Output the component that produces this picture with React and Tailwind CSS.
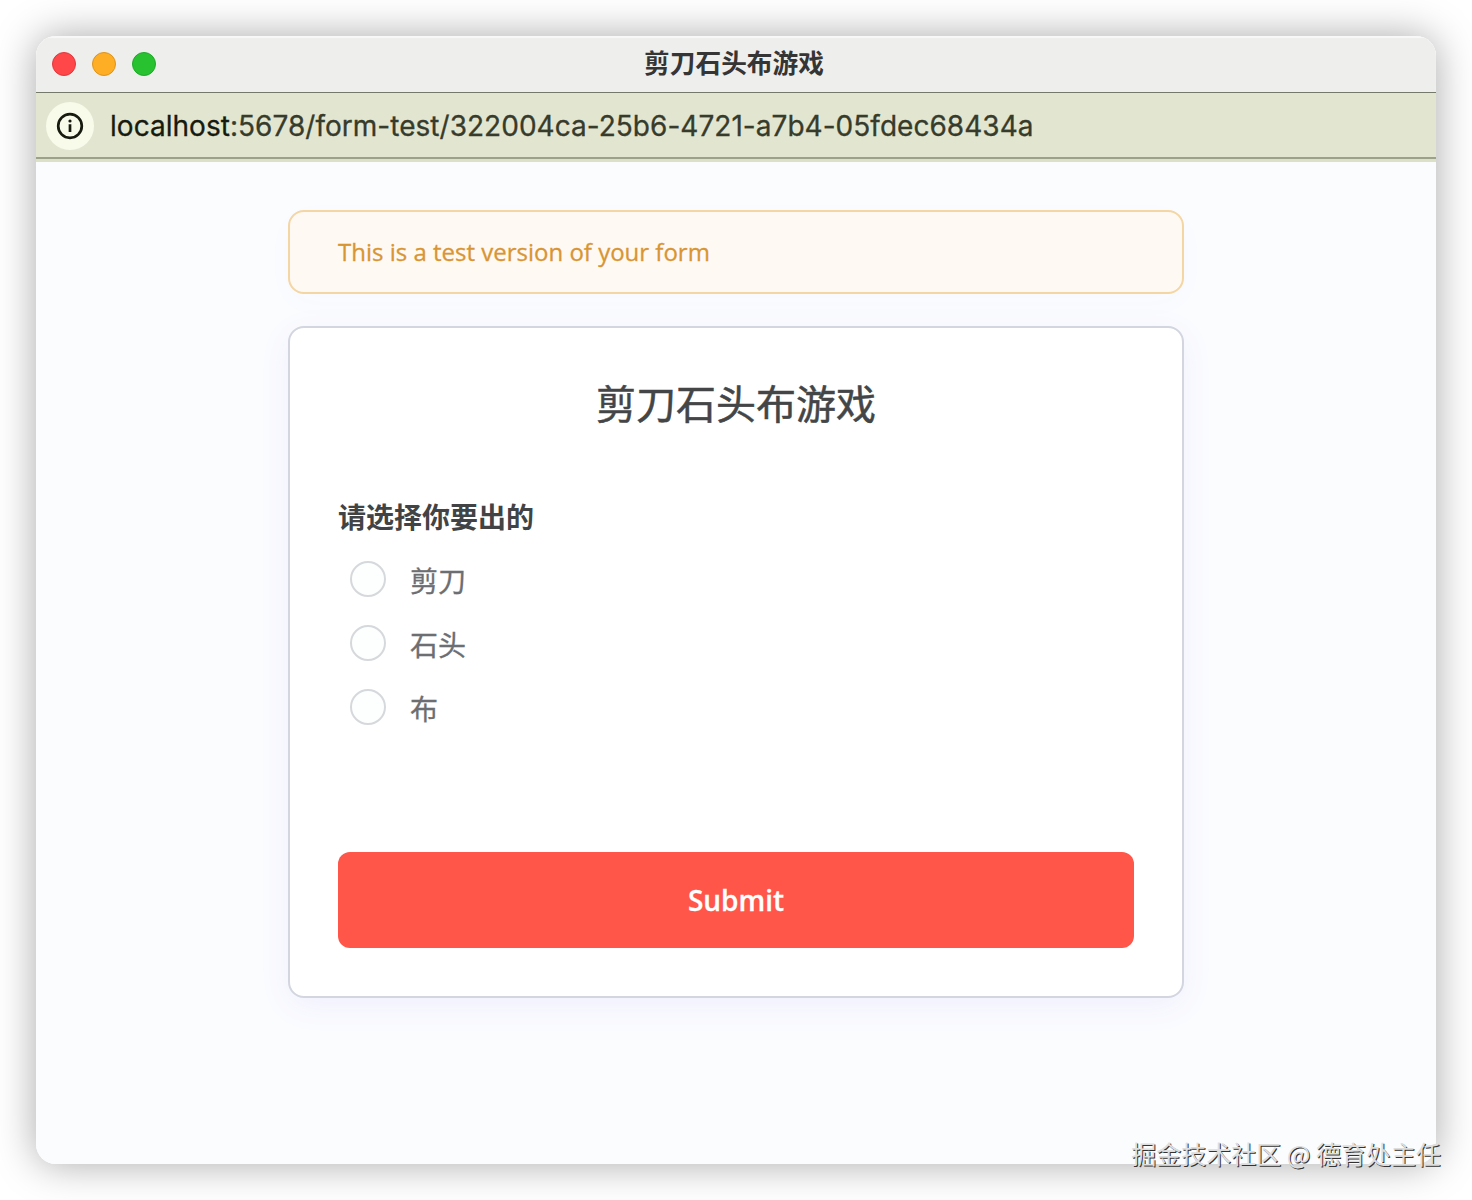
const options = ["剪刀", "石头", "布"];

function TitleBar({ title }) {
  return (
    <div className="relative flex h-[57px] shrink-0 items-center justify-center border-b border-[#75796a] bg-[#eeeeec] shadow-[inset_0_2px_1px_#f8f8f8]">
      <div className="absolute left-4 top-4 flex gap-4">
        <span className="size-6 rounded-full border border-[#e0383c] bg-[#ff4649]" />
        <span className="size-6 rounded-full border border-[#de931c] bg-[#fdae24]" />
        <span className="size-6 rounded-full border border-[#1fa82a] bg-[#28c231]" />
      </div>
      <h1 className="pb-1 pr-1 font-['Noto_Sans_CJK_SC',sans-serif] text-[25.7px] font-bold leading-9 text-[#353535]">
        {title}
      </h1>
    </div>
  );
}

function AddressBar() {
  return (
    <div className="shrink-0 border-b-[3px] border-[#dce0c8] bg-[#e2e6d0]">
      <div className="flex h-[66px] items-center border-b-2 border-[#9ca18a] pl-2.5 pt-0.5">
        <span className="flex size-12 items-center justify-center rounded-full bg-[#f8faea]">
          <svg width="28" height="28" viewBox="0 0 28 28" fill="none">
            <circle cx="14" cy="14" r="11.8" stroke="#171a0f" strokeWidth="2.7" />
            <circle cx="14" cy="9" r="1.6" fill="#171a0f" />
            <path d="M14 12.3v7.6" stroke="#171a0f" strokeWidth="2.7" />
          </svg>
        </span>
        <p className="whitespace-nowrap pl-4 font-['Inter',sans-serif] text-[28px] leading-10 tracking-[0.03px] text-[#373b2b] [-webkit-text-stroke:0.3px]">
          <span className="text-[#171a0f]">localhost</span>
          :5678/form-test/322004ca-25b6-4721-a7b4-05fdec68434a
        </p>
      </div>
    </div>
  );
}

function RadioOption({ label }) {
  return (
    <label className="flex h-16 items-center pl-3 text-[28px] text-[#6c6e72]">
      <input
        type="radio"
        name="choice"
        className="size-9 appearance-none rounded-full border-2 border-[#d6d9dc] bg-[#fdfefe]"
      />
      <span className="pl-6 pt-[3px] leading-10 [-webkit-text-stroke:0.3px]">{label}</span>
    </label>
  );
}

export default function App() {
  return (
    <div className="relative h-[1200px] w-[1472px] overflow-hidden bg-white p-9 font-['Open_Sans','Noto_Sans_CJK_SC',sans-serif]">
      <div className="flex h-[1128px] flex-col rounded-[20px] shadow-[0_0_40px_rgba(0,0,0,0.34)]">
        <div className="flex flex-1 flex-col overflow-hidden rounded-[20px] bg-[#fbfcfe]">
          <TitleBar title="剪刀石头布游戏" />
          <AddressBar />
          <main className="mx-auto flex w-[896px] flex-col gap-8 pt-12">
            <div className="flex h-[84px] items-center rounded-2xl border-2 border-[#f4d5a4] bg-[#fff9f3] px-12 text-2xl text-[#d89534] shadow-[0_8px_32px_rgba(99,77,255,0.02)] [-webkit-text-stroke:0.3px]">
              This is a test version of your form
            </div>
            <form className="flex h-[672px] flex-col rounded-2xl border-2 border-[#d3d5df] bg-white px-12 shadow-[0_8px_32px_rgba(99,77,255,0.07)]">
              <h2 className="pt-12 text-center text-[40px] leading-[56px] text-[#444547] [-webkit-text-stroke:0.5px]">
                剪刀石头布游戏
              </h2>
              <p className="pt-[65px] text-[28px] font-bold leading-10 text-[#424345]">请选择你要出的</p>
              <div className="pt-[10px]">
                {options.map((label) => (
                  <RadioOption key={label} label={label} />
                ))}
              </div>
              <button
                type="button"
                className="mb-12 mt-auto h-24 shrink-0 rounded-xl bg-[#ff5649] text-[28px] font-semibold text-white [-webkit-text-stroke:0.3px]"
              >
                Submit
              </button>
            </form>
          </main>
        </div>
      </div>
      <div className="absolute bottom-[27px] right-[31px] whitespace-nowrap font-['Noto_Sans_CJK_SC',sans-serif] text-[25px] leading-10 text-[#dedede] [text-shadow:1px_1px_0_#333]">
        掘金技术社区 @ 德育处主任
      </div>
    </div>
  );
}
